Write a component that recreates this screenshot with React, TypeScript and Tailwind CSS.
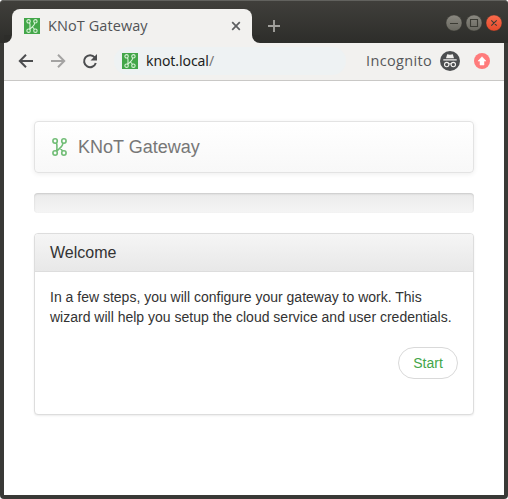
import React from 'react';

function KnotMark({ className, width = 1.5 }: { className: string; width?: number }) {
  return (
    <svg viewBox="0 0 15 18" className={className} fill="none" stroke="currentColor" strokeWidth={width}>
      <circle cx="3.1" cy="3" r="2.2" />
      <circle cx="11.9" cy="3" r="2.2" />
      <circle cx="3.1" cy="15" r="2.2" />
      <circle cx="11.9" cy="15" r="2.2" />
      <path d="M4.2 5Q4.9 6 4.9 7V11Q4.9 12.2 4.2 13M10.8 5Q10.9 7.2 9.4 8.6L4.7 13.2M8 10.4Q9.6 11.4 10.5 13.1" />
    </svg>
  );
}

function Favicon() {
  return (
    <span className="flex h-4 w-4 shrink-0 items-center justify-center bg-[#43a649] text-[#d9f3d8]">
      <KnotMark className="h-[14px] w-[12px]" width={1.4} />
    </span>
  );
}

function WindowControls() {
  return (
    <svg className="mt-[15px] h-4 w-14 shrink-0" viewBox="0 0 56 16" fill="none">
      <defs>
        <linearGradient id="grey" x2="0" y2="1"><stop stopColor="#8b8981" /><stop offset="1" stopColor="#68675f" /></linearGradient>
        <linearGradient id="red" x2="0" y2="1"><stop stopColor="#fa6b4c" /><stop offset="1" stopColor="#e44a2b" /></linearGradient>
      </defs>
      <g stroke="#2d2d29" strokeWidth=".4">
        <circle cx="8" cy="8" r="8" fill="url(#grey)" />
        <circle cx="28" cy="8" r="8" fill="url(#grey)" />
        <circle cx="48" cy="8" r="8" fill="url(#red)" />
      </g>
      <path d="M4 8.5h8M24.5 4.5h7v7h-7zM45.3 5.3l5.4 5.4M50.7 5.3l-5.4 5.4" stroke="#3b3b34" strokeWidth="1.1" />
    </svg>
  );
}

function TabStrip() {
  return (
    <header className="flex h-[43px] rounded-t-[4px] border-t border-[#62625e] bg-linear-to-b from-[#403f3b] to-[#2d2d2a] pl-1">
      <div className="mt-[34px] flex w-2 shrink-0 items-end bg-[#f2f1ef]">
        <div className="h-full w-full rounded-br-[8px] bg-[#2d2d2a]" />
      </div>
      <div className="mt-2 flex w-60 shrink-0 items-center rounded-t-[8px] bg-[#f2f1ef] pl-3">
        <Favicon />
        <span className="ml-2 w-[183px] shrink-0 whitespace-nowrap font-['Open_Sans','Noto_Sans',sans-serif] text-[14.5px] leading-5 tracking-[0.08px] text-[#515356]">KNoT Gateway</span>
        <svg className="h-[10px] w-[10px] shrink-0" viewBox="0 0 10 10" stroke="#5c5e60" strokeWidth="1.7"><path d="M1.2 1.2l7.6 7.6M8.8 1.2L1.2 8.8" /></svg>
      </div>
      <div className="mt-[34px] w-2 shrink-0 bg-[#f2f1ef]"><div className="h-full rounded-bl-[8px] bg-[#2d2d2a]" /></div>
      <svg className="ml-2 mt-[19px] h-3 w-3" viewBox="0 0 12 12" stroke="#a1a09c" strokeWidth="1.9"><path d="M6 0v12M0 6h12" /></svg>
      <div className="flex-1" />
      <div className="mr-[6px] -mt-[1px]"><WindowControls /></div>
    </header>
  );
}

function Toolbar() {
  return (
    <nav className="mx-1 flex h-[38px] items-center border-b border-[#c9c8c6] bg-[#f2f1ef] pb-px font-['Open_Sans','Noto_Sans',sans-serif]">
      <svg className="ml-[14px] h-4 w-[84px] shrink-0" viewBox="0 0 84 16" fill="none" strokeWidth="2">
        <path d="M15 8H2M8 1.8L1.8 8 8 14.2" stroke="#4c4d4f" />
        <path d="M33 8h13M40 1.8L46.2 8 40 14.2" stroke="#a4a3a2" />
        <path d="M76.7 4.3A6 6 0 1 0 77.8 10" stroke="#4c4d4f" />
        <path d="M79 1v6.5h-6.5z" fill="#4c4d4f" />
      </svg>
      <div className="ml-[12px] flex h-7 w-[232px] shrink-0 items-center rounded-full bg-[#eef2f3] pl-2">
        <Favicon />
        <span className="ml-2 font-['Noto_Sans',sans-serif] text-sm leading-5 tracking-[-0.08px] text-[#1d1f22]">knot.local<span className="text-[#777]">/</span></span>
      </div>
      <span className="ml-5 w-[74px] shrink-0 text-[14.5px] leading-5 tracking-[0.36px] text-[#56585a]">Incognito</span>
      <svg className="h-5 w-5 shrink-0" viewBox="0 0 20 20">
        <circle cx="10" cy="10" r="10" fill="#4c4e50" />
        <path d="M6 7.2L7.2 3.2Q8.5 3.5 10 3.7 11.5 3.5 12.8 3.2L14 7.2zM3.3 8.3h13.4v1.2H3.3z" fill="#f2f1ef" />
        <g fill="none" stroke="#f2f1ef" strokeWidth="1.1"><circle cx="6.7" cy="13.6" r="2.2" /><circle cx="13.3" cy="13.6" r="2.2" /><path d="M8.8 13.1q1.2-.6 2.4 0" /></g>
      </svg>
      <svg className="ml-[14px] h-4 w-4 shrink-0" viewBox="0 0 16 16"><circle cx="8" cy="8" r="8" fill="#ff7b7b" /><path d="M8 3.7L12 8.1h-2V12H6V8.1H4z" fill="white" stroke="white" strokeWidth=".5" strokeLinejoin="round" /></svg>
    </nav>
  );
}

export default function App() {
  return (
    <div className="h-[499px] w-[508px] overflow-hidden bg-white">
      <div className="flex h-full flex-col rounded-[4px] bg-[#393936]">
        <TabStrip />
        <Toolbar />
        <main className="mx-1 mb-1 flex-1 bg-white px-[30px] pt-10 font-['Liberation_Sans',Arial,sans-serif] text-[#333]">
          <div className="flex h-[52px] items-center rounded-[4px] border border-[#e3e3e3] bg-linear-to-b from-white to-[#f8f8f8] pl-[17px] shadow-[0_1px_5px_rgba(0,0,0,0.075)]">
            <KnotMark className="h-[18px] w-[15px] text-[#71bd76]" width={1.6} />
            <span className="ml-[11px] text-lg leading-5 text-[#777]">KNoT Gateway</span>
          </div>
          <div className="mt-5 h-5 rounded-[4px] bg-linear-to-b from-[#ebebeb] to-[#f5f5f5] shadow-[inset_0_1px_2px_rgba(0,0,0,0.15)]" />
          <section className="mt-5 h-[182px] rounded-[4px] border border-[#ddd] bg-white shadow-[0_1px_2px_rgba(0,0,0,0.075)]">
            <div className="h-[38px] rounded-t-[3px] border-b border-[#ddd] bg-linear-to-b from-[#f5f5f5] to-[#e8e8e8] px-[15px] pt-[10px]">
              <h1 className="text-base leading-[17px]">Welcome</h1>
            </div>
            <div className="px-[15px] pt-[15px]">
              <p className="whitespace-nowrap text-sm leading-5">In a few steps, you will configure your gateway to work. This<br />wizard will help you setup the cloud service and user credentials.</p>
              <div className="mt-5 flex justify-end">
                <button className="h-8 w-[60px] rounded-full border border-[#d9d9d9] bg-white text-sm leading-5 text-[#43a649]">Start</button>
              </div>
            </div>
          </section>
        </main>
      </div>
    </div>
  );
}
